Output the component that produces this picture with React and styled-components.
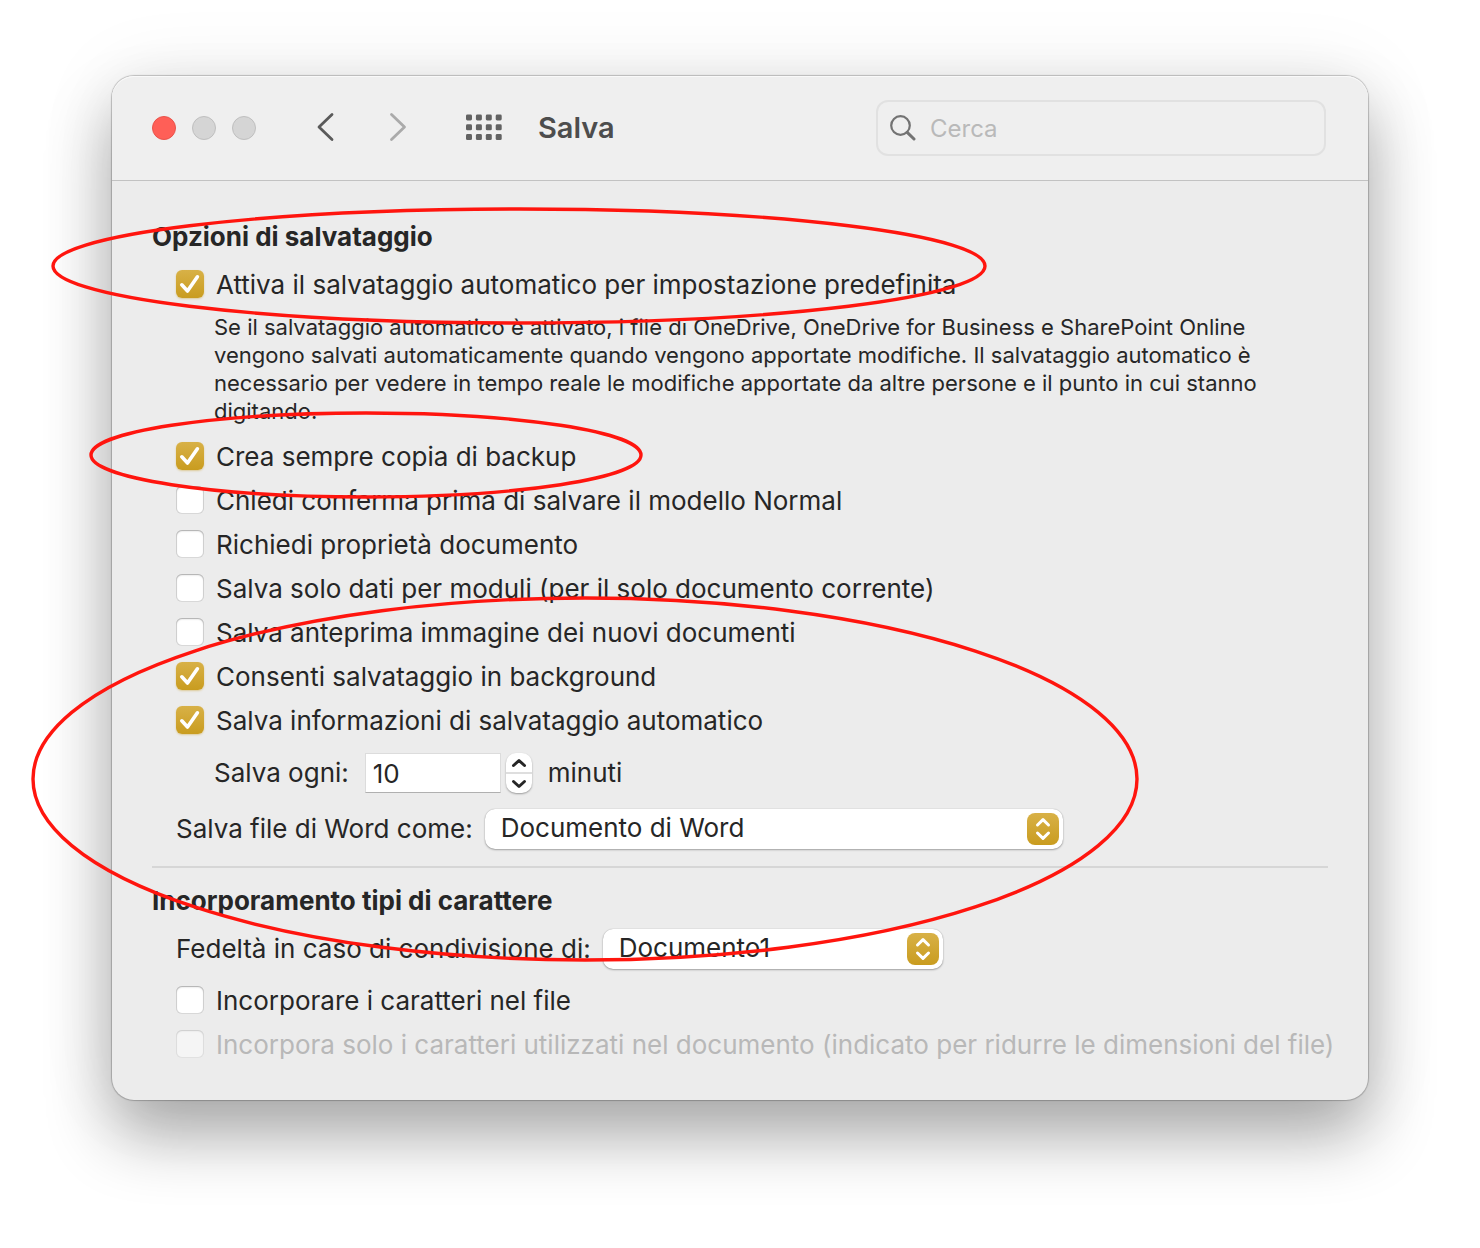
import React, { useState } from 'react'
import styled, { createGlobalStyle, css } from 'styled-components'

const SAVE_OPTIONS = [
  { id: 'backup', label: 'Crea sempre copia di backup', checked: true },
  { id: 'normal', label: 'Chiedi conferma prima di salvare il modello Normal' },
  { id: 'properties', label: 'Richiedi proprietà documento' },
  { id: 'forms', label: 'Salva solo dati per moduli (per il solo documento corrente)' },
  { id: 'preview', label: 'Salva anteprima immagine dei nuovi documenti' },
  { id: 'background', label: 'Consenti salvataggio in background', checked: true },
  { id: 'autorecover', label: 'Salva informazioni di salvataggio automatico', checked: true },
]

const FONT_OPTIONS = [
  { id: 'embed', label: 'Incorporare i caratteri nel file' },
  {
    id: 'subset',
    label: 'Incorpora solo i caratteri utilizzati nel documento (indicato per ridurre le dimensioni del file)',
    disabled: true,
  },
]

const MARKS = [
  { cx: 407, cy: 190, rx: 466, ry: 57 },
  { cx: 254, cy: 379, rx: 275, ry: 42 },
  { cx: 473, cy: 703, rx: 552, ry: 181 },
]

function Option({ id, label, checked = false, disabled }) {
  const [on, setOn] = useState(checked)

  return (
    <OptionRow>
      <CheckWrap>
        <Checkbox id={id} type="checkbox" checked={on} disabled={disabled} onChange={() => setOn(!on)} />
        {on && (
          <CheckMark viewBox="0 0 28 28">
            <path d="M5.8 14.8 L11.5 21 L21.4 6.8" />
          </CheckMark>
        )}
      </CheckWrap>
      <OptionLabel htmlFor={id} $disabled={disabled}>
        {label}
      </OptionLabel>
    </OptionRow>
  )
}

function Popup({ id, options, size }) {
  return (
    <PopupWrap $size={size}>
      <PopupSelect id={id}>
        {options.map((option) => (
          <option key={option}>{option}</option>
        ))}
      </PopupSelect>
      <PopupArrows viewBox="0 0 32 32">
        <path d="M10.5 12 L16 6.6 L21.5 12 M10.5 20 L16 25.4 L21.5 20" />
      </PopupArrows>
    </PopupWrap>
  )
}

function App() {
  const [minutes, setMinutes] = useState(10)

  return (
    <Page>
      <GlobalStyle />
      <Window>
        <Toolbar>
          <Lights>
            <Light type="button" $close aria-label="Chiudi" />
            <Light type="button" aria-label="Riduci" />
            <Light type="button" aria-label="Ingrandisci" />
          </Lights>
          <Nav>
            <IconButton type="button" aria-label="Indietro">
              <svg width="20" height="32" viewBox="0 0 20 32">
                <path d="M16 2.5 L3 15 L16 27.5" stroke="#5a5a5a" />
              </svg>
            </IconButton>
            <IconButton type="button" aria-label="Avanti">
              <svg width="20" height="32" viewBox="0 0 20 32">
                <path d="M3.5 2.5 L16.5 15 L3.5 27.5" stroke="#aaaaaa" />
              </svg>
            </IconButton>
          </Nav>
          <IconButton type="button" aria-label="Mostra tutto">
            <svg width="36" height="28" viewBox="0 0 36 28">
              {[0.5, 10.3, 20.1].map((y) =>
                [0, 9.9, 19.8, 29.7].map((x) => (
                  <rect key={`${x}-${y}`} x={x} y={y} width="6" height="6" rx="1.4" fill="#626262" />
                )),
              )}
            </svg>
          </IconButton>
          <Title>Salva</Title>
          <Search>
            <svg width="26" height="26" viewBox="0 0 26 26">
              <circle cx="10.5" cy="10.5" r="9.3" />
              <path d="M17.2 17.4 L24 24" strokeWidth="3" />
            </svg>
            <SearchInput type="search" placeholder="Cerca" aria-label="Cerca" />
          </Search>
        </Toolbar>

        <Content>
          <Heading>Opzioni di salvataggio</Heading>
          <Group>
            <Option id="autosave" label="Attiva il salvataggio automatico per impostazione predefinita" checked />
            <Description>
              Se il salvataggio automatico è attivato, i file di OneDrive, OneDrive for Business e SharePoint Online
              vengono salvati automaticamente quando vengono apportate modifiche. Il salvataggio automatico è
              necessario per vedere in tempo reale le modifiche apportate da altre persone e il punto in cui stanno
              digitando.
            </Description>
            {SAVE_OPTIONS.map((item) => (
              <Option key={item.id} {...item} />
            ))}
            <IntervalRow>
              <label htmlFor="minutes">Salva ogni:</label>
              <Interval>
                <NumberInput
                  id="minutes"
                  type="text"
                  value={minutes}
                  onChange={(e) => setMinutes(Number(e.target.value) || 0)}
                />
                <Stepper>
                  <StepButton type="button" aria-label="Aumenta" onClick={() => setMinutes(minutes + 1)}>
                    <svg width="16" height="10" viewBox="0 0 16 10">
                      <path d="M2.5 7.5 L8 2.5 L13.5 7.5" />
                    </svg>
                  </StepButton>
                  <StepButton type="button" aria-label="Diminuisci" onClick={() => setMinutes(minutes - 1)}>
                    <svg width="16" height="10" viewBox="0 0 16 10">
                      <path d="M2.5 2.5 L8 7.5 L13.5 2.5" />
                    </svg>
                  </StepButton>
                </Stepper>
              </Interval>
              <span>minuti</span>
            </IntervalRow>
            <FieldRow>
              <label htmlFor="format">Salva file di Word come:</label>
              <Popup id="format" size={578} options={['Documento di Word', 'Modello di Word']} />
            </FieldRow>
          </Group>

          <Divider />

          <Heading>Incorporamento tipi di carattere</Heading>
          <Group>
            <FieldRow>
              <label htmlFor="document">Fedeltà in caso di condivisione di:</label>
              <Popup id="document" size={340} options={['Documento1']} />
            </FieldRow>
            {FONT_OPTIONS.map((item) => (
              <Option key={item.id} {...item} />
            ))}
          </Group>
        </Content>

        <Marks aria-hidden="true">
          {MARKS.map((mark) => (
            <ellipse key={mark.cy} {...mark} />
          ))}
        </Marks>
      </Window>
    </Page>
  )
}

export default App

const GlobalStyle = createGlobalStyle`
  * {
    box-sizing: border-box;
  }

  body {
    margin: 0;
    background: #fff;
    color: #262626;
    font-family: Inter, 'Liberation Sans', sans-serif;
    font-size: 26px;
    line-height: 32px;
  }

  button,
  input,
  select {
    margin: 0;
    color: inherit;
    font: inherit;
  }
`

const gold = css`
  background: linear-gradient(#d8b147, #c99c1f);
`

const Page = styled.main`
  min-height: 100vh;
  padding: 76px 112px 148px;
  overflow: hidden;
`

const Window = styled.section`
  position: relative;
  border-radius: 22px;
  background: #ececec;
  box-shadow:
    0 0 1px 1px rgba(0, 0, 0, 0.22),
    0 0 80px rgba(0, 0, 0, 0.08),
    0 36px 66px rgba(0, 0, 0, 0.32);
`

const Toolbar = styled.header`
  display: flex;
  align-items: center;
  height: 105px;
  padding: 0 42px 0 40px;
  border-bottom: 1px solid #c2c2c2;
  border-radius: 22px 22px 0 0;
  background: #efefef;
  box-shadow: inset 0 1px #f9f9f9;
`

const Lights = styled.div`
  display: flex;
  gap: 16px;
`

const Light = styled.button`
  width: 24px;
  height: 24px;
  padding: 0;
  border: 1px solid ${(props) => (props.$close ? '#e9534b' : '#bfbfbf')};
  border-radius: 50%;
  background: ${(props) => (props.$close ? '#ff5f57' : '#d5d5d5')};
`

const Nav = styled.div`
  display: flex;
  gap: 52px;
  margin: 0 58px 0 60px;
`

const IconButton = styled.button`
  display: flex;
  padding: 0;
  border: 0;
  background: none;

  path {
    fill: none;
    stroke-width: 2.8;
    stroke-linecap: round;
    stroke-linejoin: round;
  }
`

const Title = styled.h1`
  flex: 1;
  margin: 0 0 0 36px;
  color: #4d4d4d;
  font-size: 29px;
  font-weight: 600;
`

const Search = styled.div`
  display: flex;
  align-items: center;
  gap: 14px;
  width: 450px;
  height: 56px;
  padding: 0 12px;
  border: 2px solid #e1e1e1;
  border-radius: 12px;

  svg {
    flex: none;
    fill: none;
    stroke: #737373;
    stroke-width: 2.2;
    stroke-linecap: round;
  }
`

const SearchInput = styled.input`
  flex: 1;
  min-width: 0;
  padding: 2px 0 0;
  border: 0;
  outline: 0;
  background: none;
  font-size: 24px;

  &::placeholder {
    color: #b9b9b9;
    opacity: 1;
  }
`

const Content = styled.div`
  padding: 40px 40px 33px;
`

const Heading = styled.h2`
  margin: 0;
  font-size: 26px;
  font-weight: 700;
`

const Group = styled.div`
  padding: 10px 0 0 24px;
`

const OptionRow = styled.div`
  display: flex;
  align-items: center;
  gap: 12px;
  height: 44px;
`

const CheckWrap = styled.span`
  position: relative;
  display: flex;
  flex: none;
  margin-bottom: 2px;
`

const Checkbox = styled.input`
  appearance: none;
  width: 28px;
  height: 28px;
  border-radius: 6px;
  background: #fff;
  box-shadow:
    inset 0 0 0 1px rgba(0, 0, 0, 0.14),
    inset 0 1px 2px rgba(0, 0, 0, 0.22);

  &:checked {
    ${gold}
    box-shadow: 0 1px 2px rgba(201, 156, 31, 0.4);
  }

  &:disabled {
    opacity: 0.5;
  }
`

const CheckMark = styled.svg`
  position: absolute;
  inset: 0;
  fill: none;
  stroke: #fff;
  stroke-width: 3.6;
  stroke-linecap: round;
  stroke-linejoin: round;
  pointer-events: none;
`

const OptionLabel = styled.label`
  color: ${(props) => (props.$disabled ? '#b8b8b8' : 'inherit')};
  white-space: nowrap;
`

const Description = styled.p`
  margin: 6px 0 10px;
  padding: 0 40px 0 38px;
  font-size: 22px;
  line-height: 28px;
`

const FieldRow = styled.div`
  display: flex;
  align-items: center;
  gap: 12px;
  min-height: 44px;
  margin-bottom: 8px;
`

const IntervalRow = styled(FieldRow)`
  gap: 16px;
  margin: 8px 0 12px;
  padding-left: 38px;
`

const Interval = styled.div`
  display: flex;
  gap: 5px;
`

const NumberInput = styled.input`
  width: 136px;
  height: 40px;
  padding: 0 7px;
  border: 1px solid #dcdcdc;
  border-bottom-color: #b0b0b0;
  outline: 0;
  background: #fff;
`

const Stepper = styled.div`
  display: flex;
  flex-direction: column;
  width: 26px;
  height: 40px;
  border-radius: 10px;
  background: #fff;
  box-shadow: 0 1px 2px rgba(0, 0, 0, 0.35);
`

const StepButton = styled.button`
  display: flex;
  flex: 1;
  align-items: center;
  justify-content: center;
  padding: 0;
  border: 0;
  background: none;

  & + & {
    border-top: 2px solid #dedede;
  }

  path {
    fill: none;
    stroke: #262626;
    stroke-width: 3;
    stroke-linecap: round;
    stroke-linejoin: round;
  }
`

const PopupWrap = styled.div`
  position: relative;
  width: ${(props) => props.$size}px;
`

const PopupSelect = styled.select`
  appearance: none;
  display: block;
  width: 100%;
  height: 40px;
  padding: 0 44px 2px 16px;
  border: 0;
  border-radius: 10px;
  outline: 0;
  background: #fff;
  box-shadow:
    0 0 1px rgba(0, 0, 0, 0.3),
    0 1px 2px rgba(0, 0, 0, 0.3);
`

const PopupArrows = styled.svg`
  position: absolute;
  top: 4px;
  right: 4px;
  width: 32px;
  height: 32px;
  border-radius: 8px;
  ${gold}
  fill: none;
  stroke: #fff;
  stroke-width: 3;
  stroke-linecap: round;
  stroke-linejoin: round;
  pointer-events: none;
`

const Divider = styled.hr`
  height: 2px;
  margin: 15px 0 17px;
  border: 0;
  background: #d6d6d6;
`

// hand drawn highlights, they run past the window edges
const Marks = styled.svg`
  position: absolute;
  top: 0;
  left: 0;
  overflow: visible;
  fill: none;
  stroke: #ff150e;
  stroke-width: 3.4;
  pointer-events: none;
`
